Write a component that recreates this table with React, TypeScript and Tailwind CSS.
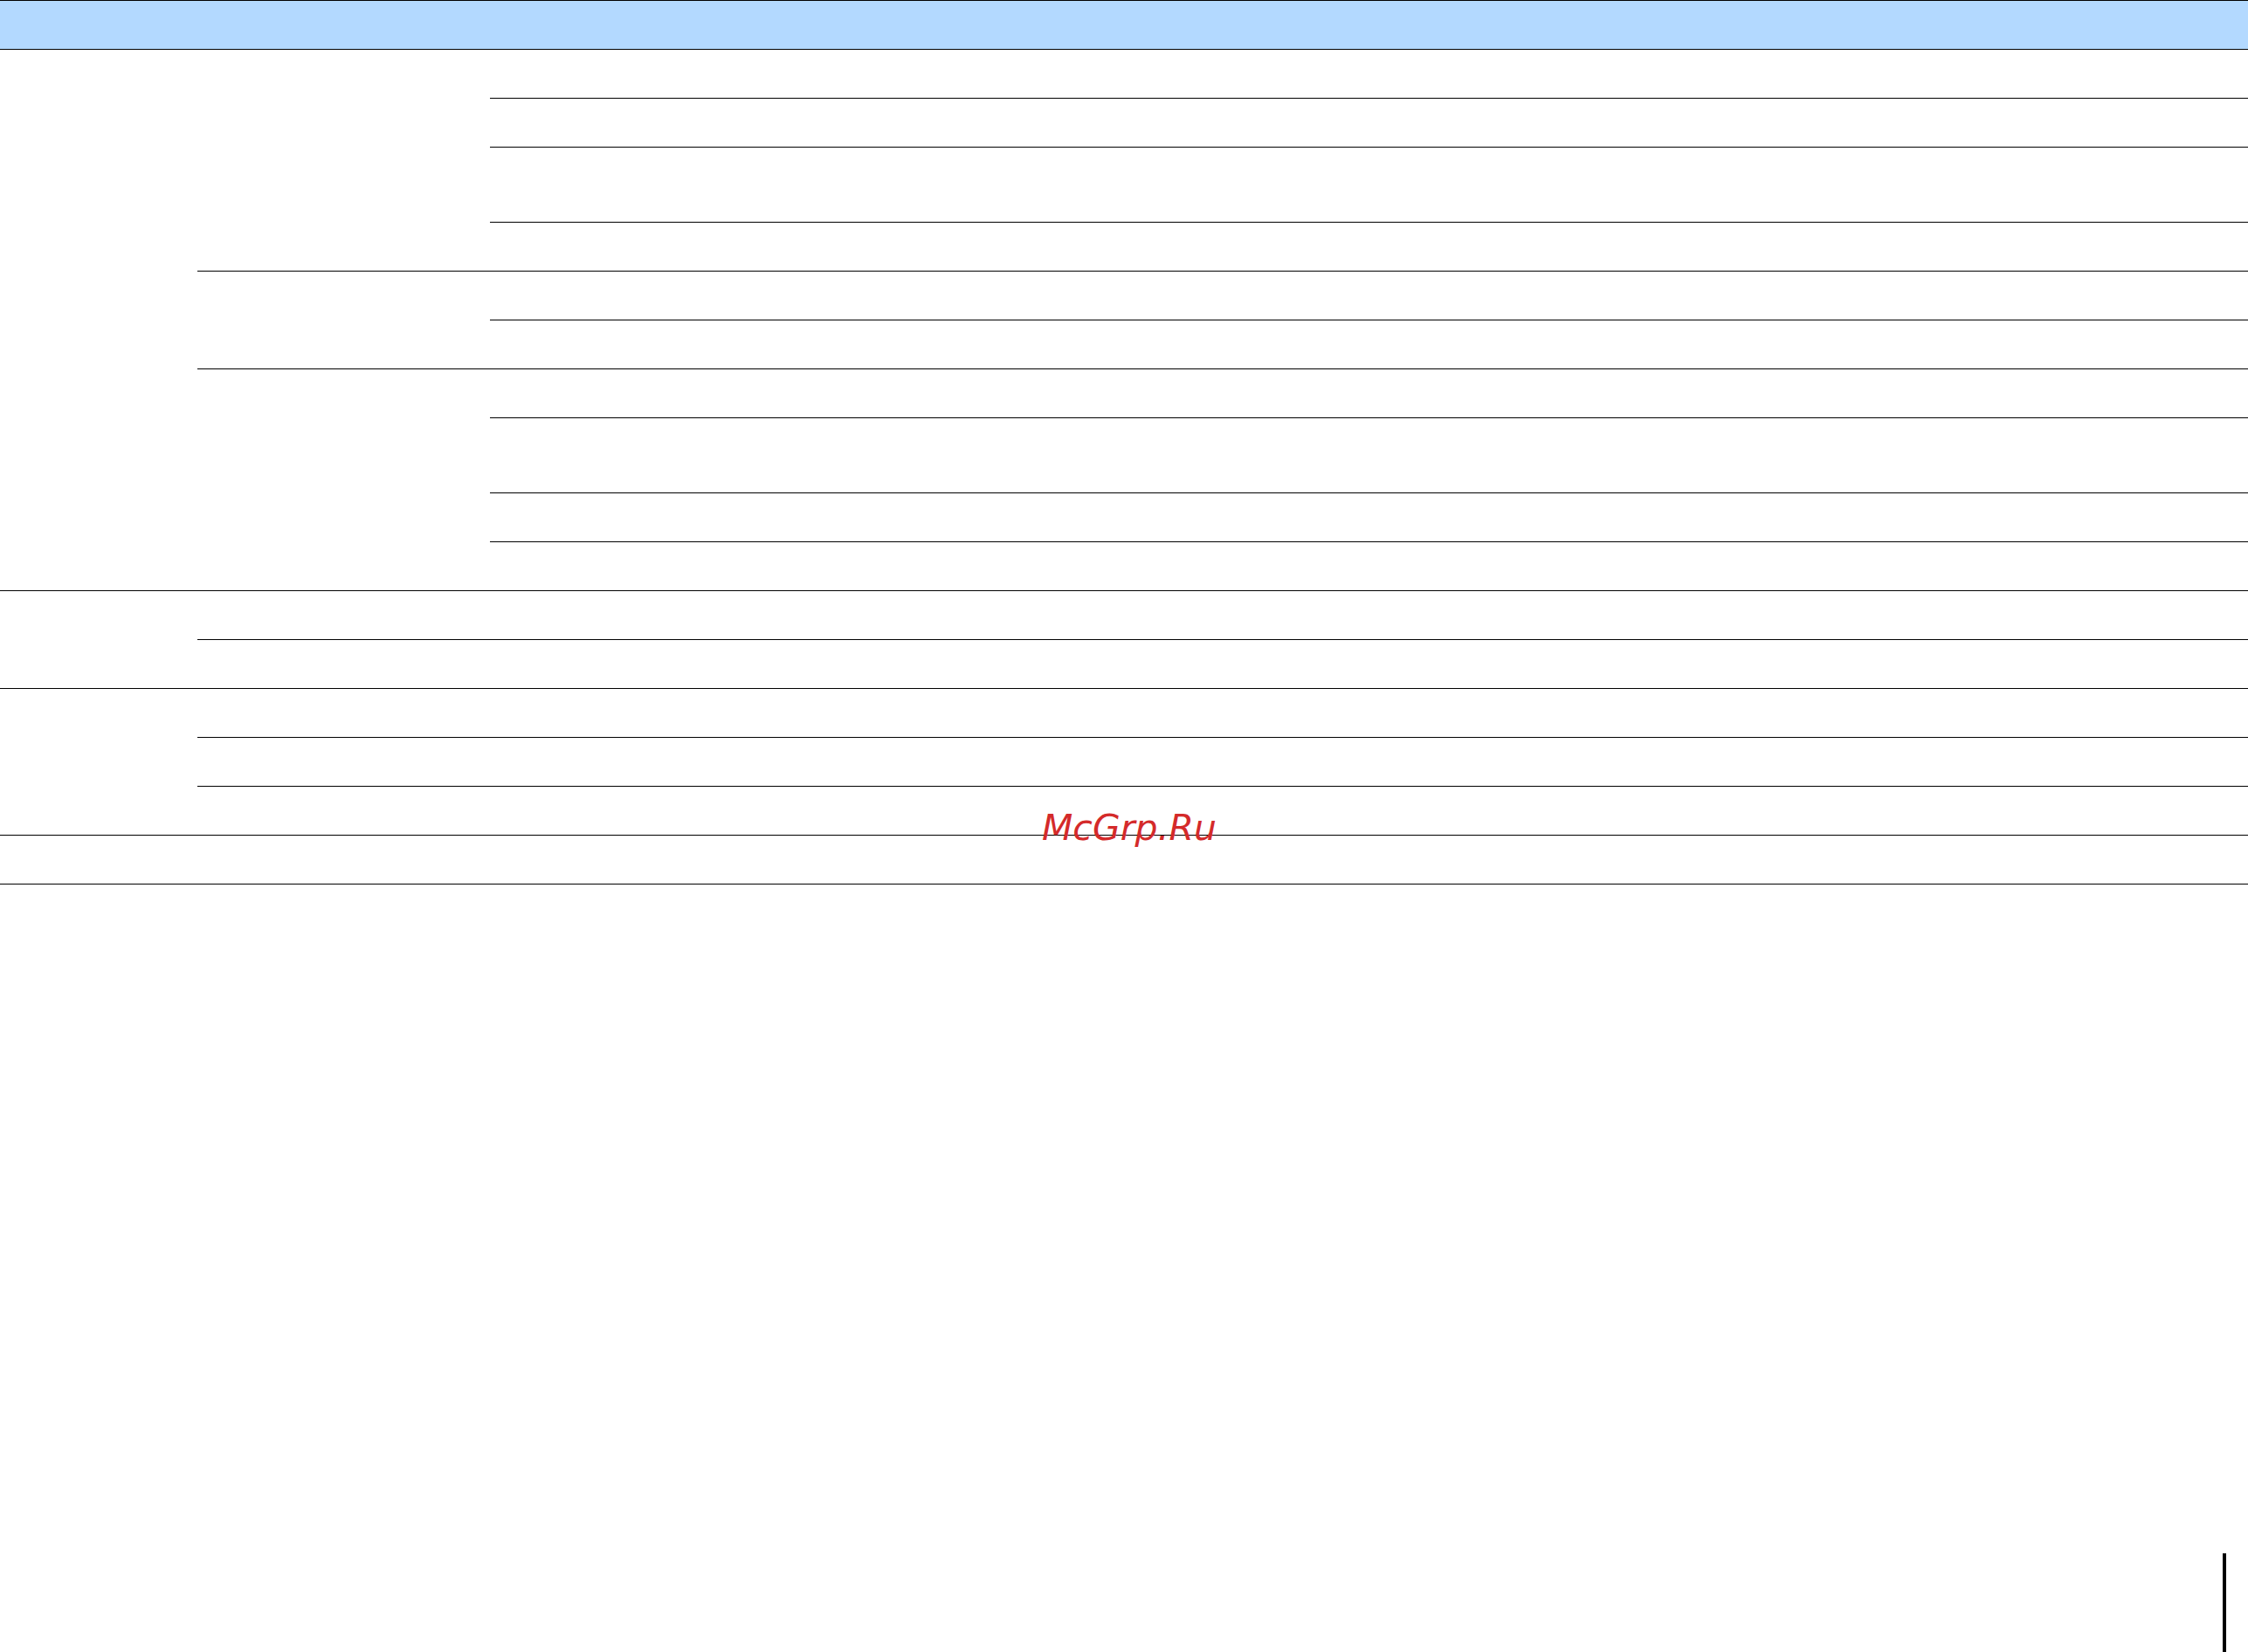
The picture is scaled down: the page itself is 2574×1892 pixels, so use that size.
const tall = 86;
const row = 56;

function Rows({ heights }: { heights: number[] }) {
  return (
    <div className="flex flex-1 flex-col">
      {heights.map((h, i) => (
        <div
          key={i}
          className={h === tall ? "h-[86px] border-b border-black" : "h-[56px] border-b border-black"}
        />
      ))}
    </div>
  );
}

function SubGroup({ heights }: { heights: number[] }) {
  return (
    <div className="flex">
      <div className="w-[335px] shrink-0 border-b border-black" />
      <Rows heights={heights} />
    </div>
  );
}

function Group({ children }: { children: React.ReactNode }) {
  return (
    <div className="flex">
      <div className="w-[226px] shrink-0 border-b border-black" />
      <div className="flex flex-1 flex-col">{children}</div>
    </div>
  );
}

export default function App() {
  return (
    <div className="relative h-[1892px] w-full overflow-hidden bg-white font-['DejaVu_Sans',sans-serif]">
      {/* header band */}
      <div className="h-[57px] border-y border-black bg-[#b3d9ff]" />

      <Group>
        <SubGroup heights={[row, row, tall, row]} />
        <SubGroup heights={[row, row]} />
        <SubGroup heights={[row, tall, row, row]} />
      </Group>

      <Group>
        <Rows heights={[row, row]} />
      </Group>

      <Group>
        <Rows heights={[row, row, row]} />
      </Group>

      <div className="h-[56px] border-b border-black" />

      {/* watermark */}
      <div className="absolute left-[1193px] top-[928px] text-[41px] italic leading-[41px] text-[#d42a2a]">
        McGrp.Ru
      </div>

      {/* page edge marker */}
      <div className="absolute left-[2545px] top-[1779px] h-[113px] w-[4px] bg-black" />
    </div>
  );
}
